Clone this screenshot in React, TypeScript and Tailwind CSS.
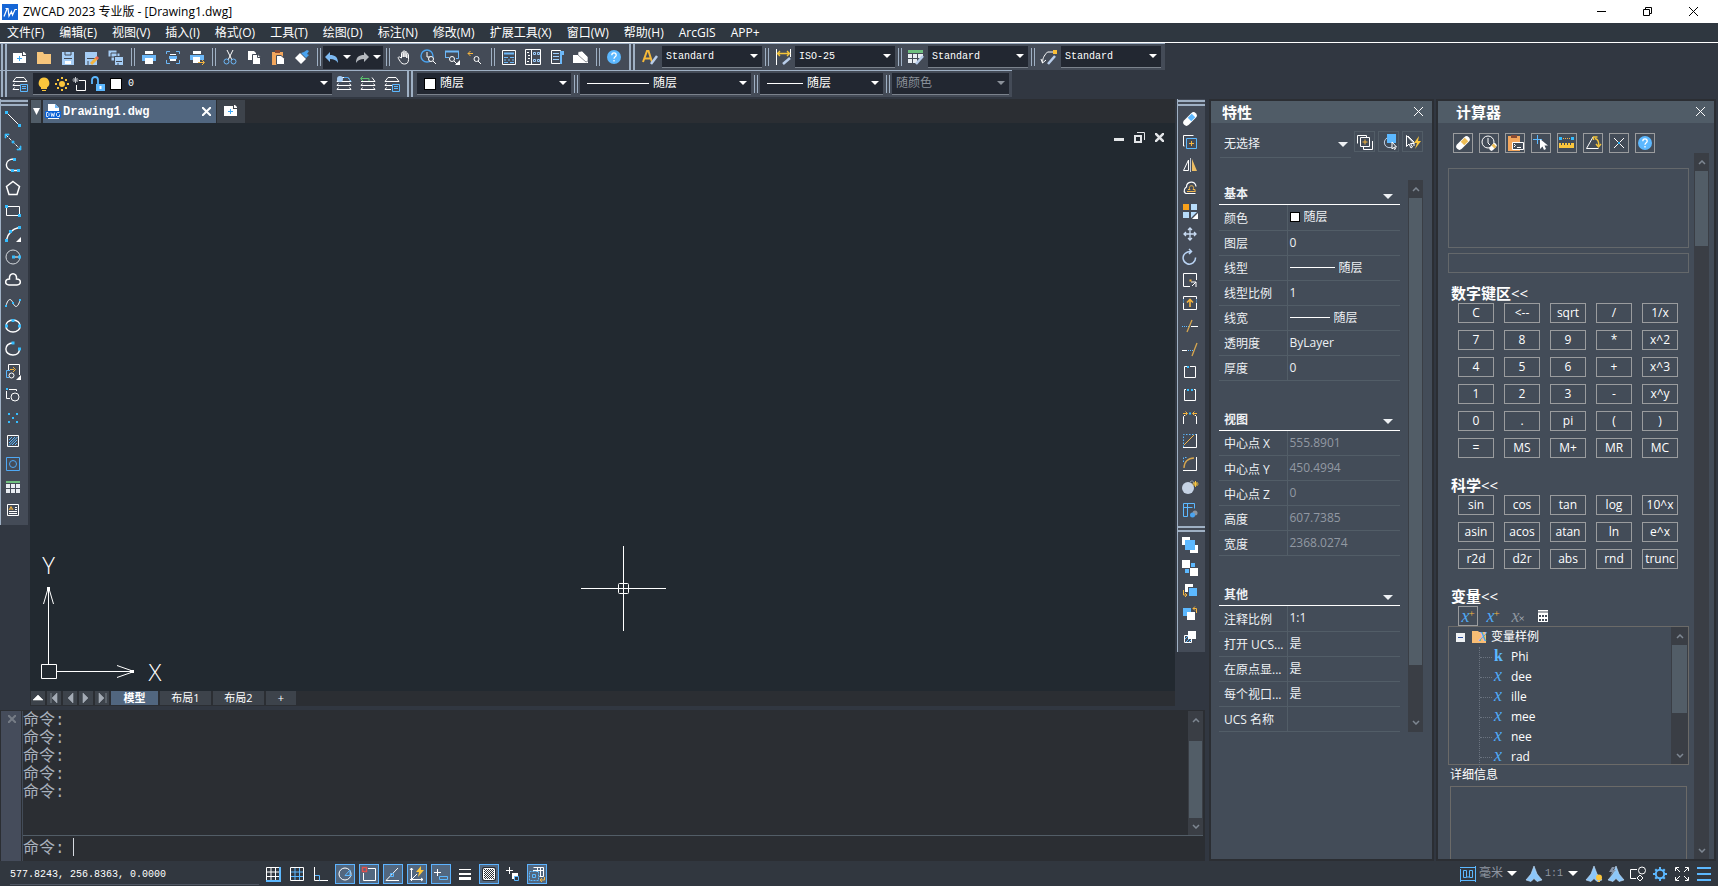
import type { ReactNode } from 'react';
import clsx from 'clsx';

const icons: Record<string, ReactNode> = {
  // standard toolbar
  new: (
    <>
      <path d="M1 4h9v3h4v7H1z" fill="#fff" stroke="none" />
      <path d="M11 3h1l2 2v1h-3z" fill="#fff" stroke="none" />
      <path d="M5 9.5h5M7.5 7v5" stroke="#3fa9f5" />
    </>
  ),
  open: <path d="M1 3h6l1 2h7v10H1z" fill="#f6c57c" stroke="none" />,
  save: (
    <>
      <path d="M2 3h12v13H2z" fill="#a6cdf5" stroke="none" />
      <path d="M5 12h6v3H5z" fill="#fff" stroke="none" />
      <path d="M4 9.5h8M5 3v3h6V3" stroke="#444b57" />
    </>
  ),
  saveAs: (
    <>
      <path d="M1 3h12v13H1z" fill="#a6cdf5" stroke="none" />
      <path d="M3 9.5h8M4 12v4" stroke="#444b57" />
      <path d="M7 15l6-6" stroke="#f5b53f" strokeWidth="3" />
      <path d="M12 10l2-2" stroke="#f06a55" strokeWidth="3" />
    </>
  ),
  saveAll: (
    <>
      <path d="M0 1h9v7H0zM3 4h9v8H3z" fill="#a6cdf5" stroke="#444b57" />
      <path d="M6.5 7.5h9v9h-9z" fill="#a6cdf5" stroke="#444b57" />
      <path d="M8 12.5h6M10 14v2" stroke="#444b57" />
    </>
  ),
  print: (
    <>
      <path d="M4 2h8v3H4z" fill="#fff" stroke="none" />
      <path d="M1 6h14v6H1z" fill="#6db8f8" stroke="none" />
      <path d="M4 9h8v6H4z" fill="#fff" stroke="none" />
    </>
  ),
  preview: (
    <>
      <path d="M1.5 5V2.5H5M11 2.5h3.5V5M14.5 11v3.5H11M5 14.5H1.5V11" stroke="#6db8f8" />
      <path d="M5 5h6v1H5zM5 9h6v3H5z" fill="#fff" stroke="none" />
      <path d="M4 7h8v3H4z" fill="#6db8f8" stroke="none" />
    </>
  ),
  publish: (
    <>
      <path d="M4 2h8v3H4z" fill="#fff" stroke="none" />
      <path d="M1 6h14v5H1z" fill="#6db8f8" stroke="none" />
      <path d="M4 8h7v6H4z" fill="#fff" stroke="none" />
      <path d="M9 13.5h6M13 11l2.5 2.5L13 16" stroke="#f5b53f" />
    </>
  ),
  cut: (
    <>
      <path d="M5 1l5 10M11 1L6 11" stroke="#fff" />
      <circle cx="4.5" cy="12.5" r="2.5" stroke="#6db8f8" />
      <circle cx="11.5" cy="12.5" r="2.5" stroke="#6db8f8" />
    </>
  ),
  copy: (
    <>
      <path d="M2 2h6l2 2v7H2z" fill="#fff" stroke="none" />
      <path d="M6.5 5.5H12l2.5 2.5v7.5h-8z" fill="#fff" stroke="#444b57" />
      <path d="M11.5 5.5v3h3" stroke="#444b57" />
    </>
  ),
  paste: (
    <>
      <path d="M2 3h11v13H2z" fill="#f2a65c" stroke="none" />
      <path d="M5 1h5v3H5z" fill="#8a4a32" stroke="none" />
      <path d="M6.5 6.5H11l3.5 3v6h-8z" fill="#fff" stroke="#444b57" />
    </>
  ),
  brush: (
    <>
      <path d="M1 9l5-5 6 6-5 5z" fill="#fff" stroke="none" />
      <path d="M7 4l5 5 3-3-2-1 2-3-2-1-3 2z" fill="#4aa3ef" stroke="none" />
    </>
  ),
  undo: <path d="M6 3v3c5 0 8 2 8 8-2-3-4-4-8-4v3L1 8z" fill="#7db9f2" stroke="none" />,
  redo: <path d="M10 3v3c-5 0-8 2-8 8 2-3 4-4 8-4v3l5-5z" fill="#b5b9bf" stroke="none" />,
  hand: (
    <path d="M5.5 9V4.2c0-1.3 1.7-1.3 1.7 0V8 2.7c0-1.3 1.8-1.3 1.8 0V8 3.5c0-1.3 1.8-1.3 1.8 0V9 5.5c0-1.3 1.7-1.3 1.7 0v5c0 3-1.5 4.5-4 4.5-2 0-3.2-.8-4.2-2.5L2.3 9.3c-.6-1.2.8-2 1.7-1z" stroke="#fff" />
  ),
  zoomRealtime: (
    <>
      <circle cx="7" cy="7" r="6" stroke="#4aa3ef" strokeWidth="1.4" />
      <path d="M7 3v5h3" stroke="#fff" />
      <circle cx="11" cy="10" r="2.5" stroke="#fff" fill="#444b57" />
      <path d="M13 12l3 3" stroke="#fff" />
    </>
  ),
  zoomWindow: (
    <>
      <path d="M1.5 9V2.5h13v7H12M1 8.5h4" stroke="#6db8f8" />
      <path d="M1 2.5h14" stroke="#6db8f8" strokeWidth="2" />
      <circle cx="8" cy="10" r="2.5" stroke="#fff" fill="#444b57" />
      <path d="M10 12l3 3" stroke="#fff" />
      <path d="M16 11v5h-5z" fill="#fff" stroke="none" />
    </>
  ),
  zoomPrevious: (
    <>
      <path d="M0 4.5h5M2.5 2L0 4.5 2.5 7" stroke="#f5b53f" />
      <circle cx="8.5" cy="10" r="2.5" stroke="#fff" />
      <path d="M10 12l3 3" stroke="#fff" />
    </>
  ),
  properties: (
    <>
      <path d="M1.5 1.5h13v14h-13z" stroke="#fff" />
      <path d="M3 4.5h10" stroke="#6db8f8" strokeWidth="2" />
      <path d="M3 8.5h4M9 8.5h4M3 11h2M7 11h2M11 11h2M3 13.5h4M9 13.5h4" stroke="#6db8f8" />
    </>
  ),
  designCenter: (
    <>
      <path d="M.5.5h15v15H.5zM6.5.5v15" stroke="#fff" />
      <path d="M2 3.5h2M3 6.5h2M3 9.5h2M2 12.5h2" stroke="#fff" />
      <path d="M8.5 3.5h2v2h-2zM12.5 3.5h2v2h-2zM8.5 10.5h2v2h-2zM12.5 10.5h2v2h-2z" stroke="#9ccdfc" />
    </>
  ),
  toolPalette: (
    <>
      <path d="M2.5 1.5h9v13h-9z" stroke="#fff" />
      <path d="M4 4.5h6M4 7.5h6M4 10.5h6" stroke="#9ccdfc" />
      <path d="M11 2h4v4h-2v9h-2z" fill="#6db8f8" stroke="none" />
    </>
  ),
  clean: (
    <>
      <path d="M0 6h6l9 6v2H0z" fill="#fff" stroke="none" />
      <path d="M5 3l4-1 6 6v4l-2 1-8-7z" fill="#fff" stroke="#444b57" strokeWidth=".6" />
    </>
  ),
  textStyle: (
    <>
      <path d="M1 13L5 2h1.5L10 13M3 9.5h6" stroke="#f5b93a" strokeWidth="2" />
      <path d="M9 15l6-8" stroke="#b9cdea" strokeWidth="2.5" />
    </>
  ),
  dimStyle: (
    <>
      <path d="M1.5 0v16M15.5 0v8" stroke="#fff" />
      <path d="M3 4.5h11M5 2L2.5 4.5 5 7M12 2l2.5 2.5L12 7" stroke="#f5c53a" strokeWidth="1.4" />
      <path d="M8 15l7-6" stroke="#b9cdea" strokeWidth="2.5" />
    </>
  ),
  tableStyle: (
    <>
      <path d="M0 1h15v3H0z" fill="#6fbf7f" stroke="none" />
      <path d="M0 5h4v4H0zM5 5h4v4H5zM10 5h5v4h-5zM0 10h4v4H0zM5 10h4v4H5z" fill="#e9edf2" stroke="none" />
      <path d="M8 15l7-8" stroke="#b9cdea" strokeWidth="2.5" />
    </>
  ),
  leaderStyle: (
    <>
      <path d="M1.5 14c0-4 1-7 5-11H12M0 10l1.5 4L5 11" stroke="#fff" />
      <path d="M12 1h4v4h-4z" fill="#fbbf36" stroke="none" />
      <path d="M7 15l7-8" stroke="#b9cdea" strokeWidth="2.5" />
    </>
  ),
  help: (
    <>
      <circle cx="8" cy="8" r="7" fill="#5cb8ff" stroke="none" />
      <path d="M5.8 6.2c0-3 4.400-3 4.400 0 0 1.600-2.200 1.600-2.200 3.600M8 11v1.500" stroke="#fff" strokeWidth="1.3" />
    </>
  ),
  // layers
  layers: (
    <>
      <path d="M4 1.5h8l3 4H1zM2.5 7.5L1 9.5h7M2.5 11.5L1 13.5h6" stroke="#fff" />
      <path d="M8.5 8.5h7v7h-7zM10 10.5h4M10 12.5h4" stroke="#5cb8ff" fill="#444b57" />
    </>
  ),
  layerPrev: (
    <>
      <path d="M4 1.5h8l3 4H1zM2.5 7.5L1 9.5h14l-1.5-2M2.5 11.5L1 13.5h14l-1.5-2" stroke="#fff" />
      <circle cx="4" cy="3" r="3" fill="#a6cdf5" stroke="none" />
      <path d="M8 1.5h4l3 4" stroke="#4aa3ef" />
    </>
  ),
  layerBack: (
    <>
      <path d="M12 1.5l3 4H1M2.5 7.5L1 9.5h14l-1.5-2M2.5 11.5L1 13.5h14l-1.5-2" stroke="#fff" />
      <path d="M9 5V2.5H1M3 0L.5 2.5 3 5" stroke="#5ac46c" />
    </>
  ),
  bulb: (
    <>
      <path d="M8 1.5a5.5 5.5 0 0 1 3 10V13H5v-1.5a5.5 5.5 0 0 1 3-10z" fill="#fbc63c" stroke="none" />
      <path d="M6 14.5h4" stroke="#fbc63c" />
    </>
  ),
  sun: (
    <>
      <circle cx="8" cy="8" r="3" fill="#fbc63c" stroke="none" />
      <path d="M7 1h2v2H7zM7 13h2v2H7zM1 7h2v2H1zM13 7h2v2h-2zM3 3h2v2H3zM11 3h2v2h-2zM3 11h2v2H3zM11 11h2v2h-2z" fill="#fbc63c" stroke="none" />
    </>
  ),
  freeze: (
    <>
      <path d="M7 4.5h6.5v10h-9V9" stroke="#fff" />
      <path d="M3.5 1v6M.5 4h6M1.5 2l4 4M5.5 2l-4 4" stroke="#c3c7cd" />
    </>
  ),
  unlock: (
    <>
      <path d="M2 8V4c0-4 6-4 6 0v4" stroke="#5cb8ff" strokeWidth="1.8" />
      <path d="M6 8h9v7H6z" fill="#5cb8ff" stroke="none" />
      <path d="M10.5 10v3" stroke="#fff" strokeWidth="2" />
    </>
  ),
  // draw
  line: (
    <>
      <path d="M2 2l12 12" />
      <path d="M0 0h3v3H0zM13 13h3v3h-3z" fill="#35bdff" stroke="none" />
    </>
  ),
  xline: (
    <>
      <path d="M1 1l14 14" strokeDasharray="3 1.5" />
      <path d="M0 0h4v1H1v3H0zM12 15h3v-3h1v4h-4zM7 7h2v2H7z" fill="#35bdff" stroke="#35bdff" strokeWidth=".7" />
    </>
  ),
  polyline: (
    <>
      <path d="M9 2C-1 2-1 13.5 8 13.5h6" strokeWidth="1.4" />
      <path d="M8 1h3v3H8zM6 12h3v3H6zM12 12h3v3h-3z" fill="#35bdff" stroke="none" />
    </>
  ),
  polygon: <path d="M8 1.5l6.5 5L12 14.5H4L1.5 6.5z" strokeWidth="1.5" />,
  rectangle: (
    <>
      <path d="M1.5 4v8.5H13M3 3.5h11.5V11" />
      <path d="M0 2h3v3H0zM13 11h3v3h-3z" fill="#35bdff" stroke="none" />
    </>
  ),
  arc: (
    <>
      <path d="M1.5 14C3 7 7 3 14 1.5" strokeWidth="1.4" />
      <path d="M0 13h3v3H0zM4 4h3v3H4zM13 0h3v3h-3z" fill="#35bdff" stroke="none" />
      <path d="M16 11v5h-5z" fill="#fff" stroke="none" />
    </>
  ),
  circle: (
    <>
      <circle cx="8" cy="8" r="7" stroke="#d4d8dd" />
      <path d="M8 8h6" />
      <path d="M7 6.5h3v3H7zM13 6.5h3v3h-3z" fill="#35bdff" stroke="none" />
    </>
  ),
  cloud: <path d="M4.5 7C3.5 0 12.5 0 11.5 7c5 0 5 6 .5 6H4c-4.5 0-4.5-6 .5-6z" strokeWidth="1.5" />,
  spline: (
    <>
      <path d="M1 11C3 3 6 3 8 8s5 5 7-3" />
      <path d="M0 10h2v2H0zM7 7h2v2H7zM14 4h2v2h-2z" fill="#35bdff" stroke="none" />
    </>
  ),
  ellipse: (
    <>
      <ellipse cx="8" cy="8" rx="7.2" ry="6" strokeWidth="1.4" />
      <path d="M6.5 1h3v3h-3zM0 6.5h3v3H0zM13 6.5h3v3h-3z" fill="#35bdff" stroke="none" />
    </>
  ),
  ellipseArc: (
    <>
      <path d="M8 2C-1.5 2-1.5 14 8 14c4 0 6.5-2 6.5-6" strokeWidth="1.4" />
      <path d="M6.5.5h3v3h-3zM13 6.5h3v3h-3z" fill="#35bdff" stroke="none" />
    </>
  ),
  insertBlock: (
    <>
      <path d="M3.5 6V.5h11V11" />
      <path d="M5 6.5H1.5v7H4" stroke="#5cb8ff" />
      <circle cx="6.5" cy="11.5" r="2.5" />
      <path d="M5 5.5h4M8 3l2.5 2.5L8 8" stroke="#f5b53f" />
      <path d="M16 11v5h-5z" fill="#fff" stroke="none" />
    </>
  ),
  makeBlock: (
    <>
      <path d="M1.5 4v7.5H5M4 2.5h7.5V4" />
      <circle cx="10" cy="10" r="4" />
      <path d="M1 1h2v2H1z" fill="#35bdff" stroke="none" />
    </>
  ),
  point: <path d="M3 3h2v2H3zM11 3h2v2h-2zM7 7h2v2H7zM3 11h2v2H3zM11 11h2v2h-2z" fill="#35bdff" stroke="none" />,
  hatch: (
    <>
      <path d="M2.5 2.5h11v11h-11z" />
      <path d="M4 7l3-3M4 10l6-6M4 12.5L12.5 4M7 12l5-5M10 12l2-2" stroke="#5cb8ff" />
    </>
  ),
  region: (
    <>
      <path d="M1.5 1.5h13v13h-13z" stroke="#4fa9f5" />
      <circle cx="8" cy="8" r="3.5" stroke="#4fa9f5" />
    </>
  ),
  table: (
    <>
      <path d="M1 2h14v2H1z" fill="#6fbf7f" stroke="none" />
      <path d="M1 5h4v4H1zM6 5h4v4H6zM11 5h4v4h-4zM1 10h4v4H1zM6 10h4v4H6zM11 10h4v4h-4z" fill="#e9edf2" stroke="none" />
    </>
  ),
  mtext: (
    <>
      <path d="M2.5 2.5h11v11h-11zM10 5.5h2M10 7.5h2M4 9.5h8M4 11.5h8" />
      <path d="M4 8l2-3.5L8 8M5 7h2" stroke="#f5b53f" />
    </>
  ),
  // modify
  erase: (
    <>
      <path d="M4.5 11.5l7-7" stroke="#fff" strokeWidth="6.5" strokeLinecap="round" />
      <path d="M7.5 8.5l4-4" stroke="#5cb8ff" strokeWidth="5" />
    </>
  ),
  eraseGold: (
    <>
      <path d="M4.5 11.5l7-7" stroke="#fff" strokeWidth="6.5" strokeLinecap="round" />
      <path d="M7.5 8.5l4-4" stroke="#edbd55" strokeWidth="5" />
    </>
  ),
  copyObject: (
    <>
      <path d="M2.5 12H1.5V1.5h10" />
      <path d="M4.5 4.5h10v10h-10z" stroke="#5cb8ff" />
      <path d="M7 9.5h5M9.5 7v5" stroke="#f5b53f" />
    </>
  ),
  mirror: (
    <>
      <path d="M6.5 3v10.5h-5z" />
      <path d="M8.5 1v14" stroke="#c3c7cd" />
      <path d="M10 2l5 12h-5z" fill="#edbd63" stroke="none" />
    </>
  ),
  offset: (
    <>
      <path d="M3.5 13.5h10M3.5 13.5c-3-3 0-6 1-6.5 0-6 9-7 9.5-.5" strokeWidth="1.2" />
      <path d="M5 11.5h8.5M6 9.5h2M11 9.5h2v2M8 9.5c-3-5 6-5 3 0" stroke="#f0b64e" />
    </>
  ),
  array: (
    <>
      <path d="M1 1h6v6H1z" fill="#f9a11b" stroke="none" />
      <path d="M9 1h6v6H9zM1 9h6v6H1z" fill="#b7dcfb" stroke="none" />
      <path d="M9 9h6l-6 6z" fill="#b7dcfb" stroke="none" />
      <path d="M16 10v6h-6z" fill="#fff" stroke="none" />
    </>
  ),
  move: (
    <path d="M8 2v12M2 8h12M6 4l2-2 2 2M6 12l2 2 2-2M4 6L2 8l2 2M12 6l2 2-2 2" stroke="#c7daf2" strokeWidth="1.3" />
  ),
  rotate: <path d="M3 4.5a6.200 6.200 0 1 0 10.500 4M3 4.500C4.500 3 6 2.500 9 2.500M7 0l2.500 2.500L7 5" stroke="#b9d3f3" strokeWidth="1.5" />,
  scale: (
    <>
      <path d="M8 14.5H1.5v-13h13V8M9 10h5v5M14 10l-4 4" />
      <path d="M7.5 7.5h2v2h-2z" fill="#f5b53f" stroke="none" />
    </>
  ),
  stretch: (
    <>
      <path d="M1.5 8v6.5h13V8M1.5 4V1.5h13V4" />
      <path d="M1.5 4.5v3M14.5 4.5v3" stroke="#5cb8ff" strokeDasharray="1 1" />
      <path d="M8 12V5M5 7.5l3-3 3 3" stroke="#f5b53f" strokeWidth="1.6" />
    </>
  ),
  trim: (
    <>
      <path d="M0 8.5h7" stroke="#5cb8ff" strokeDasharray="1 1" />
      <path d="M9 8.5h7" />
      <path d="M5 14l5-12" stroke="#d6a650" strokeWidth="1.3" />
    </>
  ),
  extend: (
    <>
      <path d="M0 9.5h5" />
      <path d="M6 9.5h5" stroke="#5cb8ff" strokeDasharray="1 1" />
      <path d="M10 15l5-13" stroke="#d6a650" strokeWidth="1.3" />
    </>
  ),
  breakPoint: (
    <>
      <path d="M5 2.5H2.5v11h11v-11H8" />
      <path d="M5 2h2v2H5z" fill="#35bdff" stroke="none" />
    </>
  ),
  break: (
    <>
      <path d="M4 2.5H2.5v11h11v-11H12" />
      <path d="M5 2h2v2H5zM9 2h2v2H9z" fill="#35bdff" stroke="none" />
    </>
  ),
  join: (
    <>
      <path d="M1.5 14V6.5L3 5M14.5 14V6.5L13 5" />
      <path d="M1 3.5h4M3.5 1.5l2 2-2 2M15 3.5h-4M12.5 1.5l-2 2 2 2" stroke="#f5b53f" />
      <path d="M7 2.5h2v2H7z" fill="#35bdff" stroke="none" />
    </>
  ),
  chamfer: (
    <>
      <path d="M14.5 1v13.5H1" />
      <path d="M1.5 14V1.5H14" stroke="#5cb8ff" strokeDasharray="1.5 1.5" />
      <path d="M2 12L12 2" stroke="#f0b64e" />
    </>
  ),
  fillet: (
    <>
      <path d="M14.5 1v13.5H1" />
      <path d="M1.5 6V1.5H6" stroke="#5cb8ff" strokeDasharray="1.5 1.5" />
      <path d="M2 12C2 6 6 2 12 2" stroke="#d6a650" strokeWidth="1.3" />
    </>
  ),
  explode: (
    <>
      <circle cx="6" cy="9" r="6" fill="#c5d2e4" stroke="none" />
      <path d="M8 3c2-2 4-1 4 2" stroke="#9aa5b3" />
      <path d="M13.5 2v6M10.5 5h6M11.5 3l4 4M15.5 3l-4 4" stroke="#fbc63c" />
    </>
  ),
  blockEdit: (
    <>
      <path d="M1.5 1.5h11v5M1.5 1.5v13h4v-13M1.5 5.5h9" stroke="#5cb8ff" />
      <circle cx="13" cy="11" r="2.5" fill="#8d949e" stroke="none" />
      <circle cx="10.5" cy="13" r="2.5" fill="#4aa3ef" stroke="none" />
    </>
  ),
  bringFront: (
    <>
      <path d="M0 0h8v3H3v5H0zM16 16H8v-3h5V8h3z" fill="#fff" stroke="none" />
      <path d="M3 3h10v10H3z" fill="#5cb8ff" stroke="none" />
    </>
  ),
  sendBack: (
    <>
      <path d="M0 0h8v8H0zM8 8h8v8H8z" fill="#fff" stroke="none" />
      <path d="M9 3h4v4H9zM3 9h4v4H3z" fill="#5cb8ff" stroke="none" />
    </>
  ),
  bringAbove: (
    <>
      <path d="M3 1h8v3H6v5H3z" fill="#fff" stroke="none" />
      <path d="M7 5h8v8H7z" fill="#5cb8ff" stroke="none" />
      <path d="M1.5 7v5H5M3 10l2 2-2 2" stroke="#f5b53f" />
    </>
  ),
  sendUnder: (
    <>
      <path d="M1 2h8v8H1z" fill="#5cb8ff" stroke="none" />
      <path d="M5 6h8v8H5z" fill="#fff" stroke="none" />
      <path d="M14.5 7V2.5H11M13 .5l-2 2 2 2" stroke="#f5b53f" />
    </>
  ),
  hatchBack: (
    <>
      <path d="M2.5 6.5h7v7h-7z" />
      <path d="M3 10l3-3M4 13l5-5M7 13l2-2" stroke="#5cb8ff" />
      <path d="M6 2h8v8H6z" fill="#fff" stroke="none" />
    </>
  ),
  // properties panel
  pickAdd: (
    <>
      <path d="M.5 9.5v-8h9v2" />
      <path d="M15.5 7v8.5h-9V13" />
      <path d="M3.5 3.5h9v9h-9z" fill="#434c58" />
      <path d="M5.5 8h5M8 5.5v5" stroke="#f5b53f" />
    </>
  ),
  select: (
    <>
      <path d="M6 4a5 5 0 1 0 5 9" stroke="#c5d2e4" />
      <path d="M6 0h9v9H6z" fill="#5cb8ff" stroke="none" />
      <path d="M11 8v7l1.5-1.5 1 2 1-.5-1-2h2z" fill="#434c58" />
    </>
  ),
  quickSelect: (
    <>
      <path d="M1.5 1.5v11L4 10l2 4 1.5-1-2-3.5H9z" />
      <path d="M3 2l6 6v4" />
      <path d="M14 2L9 9h3l-2 6 6-8h-3z" fill="#fbc63c" stroke="none" />
    </>
  ),
  // calculator
  history: (
    <>
      <circle cx="7" cy="7" r="6" />
      <path d="M7 3v5l2 2" />
      <path d="M10.5 13.5l3-3" stroke="#fff" strokeWidth="4.5" strokeLinecap="round" />
      <path d="M12 12l2-2" stroke="#edbd55" strokeWidth="4" />
    </>
  ),
  pasteCmd: (
    <>
      <path d="M1 1h12v15H1z" fill="#f2a65c" stroke="none" />
      <path d="M4 0h6v3H4z" fill="#8a4a32" stroke="none" />
      <path d="M5.5 7.5h11v7h-11z" fill="#434c58" />
      <path d="M7 9l1.5 1.5L7 12M10 12.5h4" />
    </>
  ),
  getCoords: (
    <>
      <path d="M4.5 0v9M0 4.5h9" stroke="#5cb8ff" />
      <path d="M7 4v10l2.5-2.5L11 15l2-1-1.5-3.5H15z" fill="#fff" stroke="none" />
    </>
  ),
  distance: (
    <>
      <path d="M0 2h3v3H0zM12 2h3v3h-3z" fill="#35bdff" stroke="none" />
      <path d="M4 3.5h8" stroke="#f0b64e" strokeDasharray="1 1" />
      <path d="M0 8h15v5H0z" fill="#fbc63c" stroke="none" />
      <path d="M2.5 8v2M5.5 8v2M8.5 8v2M11.5 8v2" stroke="#434c58" />
    </>
  ),
  angle: (
    <>
      <path d="M8 2L1.5 13.5h12" />
      <path d="M10 3.5c3 1 4 4 3.5 7M8.5 5V2h4M11 9l2.5 3L16 9" stroke="#f5c53a" strokeWidth="1.4" />
    </>
  ),
  intersect: (
    <>
      <path d="M3 3l10 10M13 3L3 13" />
      <path d="M7 7h2v2H7z" fill="#35bdff" stroke="none" />
    </>
  ),
  calculator: (
    <>
      <path d="M3 2h10v12H3z" fill="#fff" stroke="none" />
      <path d="M3 4h10" stroke="#a5a9ae" strokeWidth="2" />
      <path d="M4 7h2v2H4zM7 7h2v2H7zM10 7h2v2h-2zM4 11h2v2H4zM7 11h2v2H7zM10 11h2v2h-2z" fill="#434c58" stroke="none" />
    </>
  ),
  folderVar: <path d="M1 2h6l1 1h7v11H1z" fill="#f8bd74" stroke="none" />,
  // status bar
  snap: (
    <>
      <path d="M1.5 1.5h13v13h-13zM6 1v13M10.5 1v13M1 6h13M1 10.5h13" />
      <path d="M15 1v14H1" stroke="#5cb8ff" strokeWidth="2" />
    </>
  ),
  grid: (
    <>
      <path d="M6 2v12M10.5 2v12M2 6h12M2 10.5h12" stroke="#5cb8ff" />
      <path d="M1.5 1.5h13v13h-13z" />
    </>
  ),
  ortho: (
    <>
      <path d="M1.5 1v13.5H15" />
      <path d="M2 9.5h4.5v5" stroke="#5cb8ff" />
    </>
  ),
  polar: (
    <>
      <circle cx="8" cy="8" r="6" />
      <path d="M15 9.5H8L13 4v5" stroke="#5cb8ff" />
    </>
  ),
  osnap: (
    <>
      <path d="M7 2.5h7.5v12h-12V7" />
      <path d="M1.5 1.5h4v4h-4z" stroke="#e2504d" strokeWidth="1.5" />
    </>
  ),
  otrack: (
    <>
      <path d="M14 14.5H1L13 2" />
      <path d="M5.5 7.5h3v3h-3z" stroke="#5cb8ff" />
    </>
  ),
  ducs: (
    <>
      <path d="M2.5 15V2M1 4l1.5-2L4 4M1 13.5h13M12 12l2 1.5-2 1.500M2 14l6-6" />
      <path d="M12 0L7 6h3l-1 5 6-7h-3z" fill="#fbc63c" stroke="none" />
    </>
  ),
  dynInput: (
    <>
      <path d="M1 6.5h7M4.5 3v7" />
      <path d="M6.5 10.5h8v3h-8z" stroke="#5cb8ff" />
    </>
  ),
  lineWeight: (
    <>
      <path d="M2 3.5h12" strokeWidth="1" />
      <path d="M2 8h12" strokeWidth="2" />
      <path d="M2 12.5h12" strokeWidth="3" />
    </>
  ),
  transparency: (
    <>
      <rect x="1" y="1" width="14" height="14" rx="2" fill="#2a2e34" stroke="none" />
      <rect x="2.5" y="2.5" width="11" height="11" rx="1" fill="#fff" />
      <path d="M3 3.5h10M3 5.5h10M3 7.5h10M3 9.5h10M3 11.5h10" stroke="#2a2e34" strokeDasharray="1 1" />
      <path d="M4 4.5h9M4 6.5h9M4 8.5h9M4 10.5h9M4 12.5h9" stroke="#2a2e34" strokeDasharray="1 1" />
    </>
  ),
  cycle: (
    <>
      <path d="M1 4.5h7M4.5 1v7" />
      <path d="M7 7h6v6H7z" fill="#fff" stroke="none" />
      <path d="M9.5 10.5h4v4h-4z" stroke="#5cb8ff" fill="#31373f" />
    </>
  ),
  annoMon: (
    <>
      <path d="M4.5 1.5h10v9h-4M4 4.5h10M8.5 2v4M11.5 2v8" />
      <path d="M.5 5.5h9v9h-9z" stroke="#5cb8ff" strokeDasharray="2 1" />
      <path d="M3.5 8.5h3v3h-3z" stroke="#5cb8ff" />
      <path d="M15.5 11v3h-4M13 12l-2 2 2 2" stroke="#f5b53f" />
    </>
  ),
  units: (
    <>
      <path d="M0 1.5h16M.5 3v13M15.5 0v16M0 14.5h16" stroke="#5cb8ff" />
      <path d="M3.5 4.5h3v7h-3zM9.5 4.5h3v7h-3zM8 10v2" stroke="#5cb8ff" />
    </>
  ),
  annoScale: (
    <path d="M8 0l3 8 5 6-5 1.5-3-3-3 3L0 14l5-6z" fill="#8cc7fa" stroke="#c7e2fb" strokeWidth=".6" />
  ),
  annoVisible: (
    <>
      <path d="M8 0l3 8 5 6-5 1.5-3-3-3 3L0 14l5-6z" fill="#8cc7fa" stroke="#c7e2fb" strokeWidth=".6" />
      <circle cx="13" cy="11.5" r="3" fill="#fbc63c" stroke="none" />
      <path d="M12 15.5h2" stroke="#fbc63c" />
    </>
  ),
  annoAuto: (
    <>
      <path d="M8 0l3 8 5 6-5 1.5-3-3-3 3L0 14l5-6z" fill="#8cc7fa" stroke="#c7e2fb" strokeWidth=".6" />
      <path d="M4 1L1 6h3L2 10l6-6H5l2-3z" fill="#8794a8" stroke="none" />
    </>
  ),
  isolate: (
    <>
      <path d="M7 3.5H.5v9H6" />
      <circle cx="12" cy="4.5" r="3.5" />
      <path d="M10 9l-3 3 3 3 3-3z" />
    </>
  ),
  gear: (
    <>
      <circle cx="8" cy="8" r="4.2" stroke="#5cb8ff" strokeWidth="2" />
      <path d="M7 1h2v3H7zM7 12h2v3H7zM1 7h3v2H1zM12 7h3v2h-3zM2.5 4L4 2.5l2 2L4.5 6zM10 11.5l1.5-1.5 2 2-1.5 1.5zM12 2.5L13.5 4l-2 2L10 4.5zM4.5 10L6 11.5l-2 2L2.5 12z" fill="#5cb8ff" stroke="none" />
    </>
  ),
  fullScreen: (
    <path d="M5 1.5H1.5V5M11 1.5h3.5V5M5 14.5H1.5V11M11 14.5h3.5V11M2 2l4 4M14 2l-4 4M2 14l4-4M14 14l-4-4" />
  ),
  menu: <path d="M1 2h14M1 8h14M1 14h14" stroke="#5cb8ff" strokeWidth="2" />,
};

const SANS = "font-['Open_Sans','Noto_Sans_CJK_SC',sans-serif]";
const MONO = "font-['Liberation_Mono','Noto_Sans_CJK_SC',monospace]";

function Icon({ name }: { name: string }) {
  return (
    <svg width="16" height="16" viewBox="0 0 16 16" fill="none" stroke="#fff" overflow="visible" className="shrink-0" aria-hidden="true">
      {icons[name]}
    </svg>
  );
}

function ToolButton({ name, className }: { name: string; className?: string }) {
  return (
    <button type="button" aria-label={name} className={clsx('flex shrink-0 items-center justify-center', className ?? 'h-6 w-6')}>
      <Icon name={name} />
    </button>
  );
}

function Caret({ className, large }: { className?: string; large?: boolean }) {
  return (
    <svg
      width={large ? 10 : 8}
      height={large ? 5 : 4}
      viewBox="0 0 8 4"
      className={clsx('pointer-events-none shrink-0', className)}
      aria-hidden="true"
    >
      <path d="M0 0h8L4 4z" fill="currentColor" />
    </svg>
  );
}

function Chevron({ down }: { down?: boolean }) {
  return (
    <svg width="8" height="5" viewBox="0 0 8 5" fill="none" stroke="#7e8792" strokeWidth="1.5" aria-hidden="true">
      <path d={down ? 'M1 1l3 3 3-3' : 'M1 4l3-3 3 3'} />
    </svg>
  );
}

function Grip({ wide }: { wide?: boolean }) {
  return (
    <div className={clsx('flex shrink-0 justify-center gap-0.5 self-stretch', wide ? 'w-3' : 'w-[9px] py-1')}>
      <span className={clsx('bg-[#9fb0c4]', wide ? 'w-0.5' : 'w-px')} />
      <span className={clsx('bg-[#9fb0c4]', wide ? 'w-0.5' : 'w-px')} />
    </div>
  );
}

function EdgeGrip() {
  return (
    <div className="flex shrink-0 gap-0.5 self-stretch pl-px">
      <span className="w-0.5 bg-[#9fb0c4]" />
      <span className="w-0.5 bg-[#9fb0c4]" />
    </div>
  );
}

function Combo({
  label,
  value,
  prefix,
  className,
  muted,
}: {
  label: string;
  value: string;
  prefix?: ReactNode;
  className: string;
  muted?: boolean;
}) {
  return (
    <div
      className={clsx(
        'relative flex h-[22px] shrink-0 items-center border-b border-[#7b828c] bg-[#222731]',
        muted ? 'text-[#8b919a]' : 'text-white',
        className,
      )}
    >
      {prefix}
      <select
        aria-label={label}
        className={clsx(
          'h-[21px] min-w-0 flex-1 appearance-none bg-transparent pl-1 outline-none',
          MONO,
          /^[\x00-\x7f]+$/.test(value) ? 'text-[10px]' : 'text-xs',
        )}
      >
        <option>{value}</option>
      </select>
      <Caret className="absolute right-1 top-2" />
    </div>
  );
}

function ScrollBar({ className, thumb }: { className?: string; thumb: string }) {
  return (
    <div className={clsx('flex shrink-0 flex-col bg-[#3a3e45]', className)}>
      <div className="flex h-[18px] shrink-0 items-center justify-center">
        <Chevron />
      </div>
      <div className="min-h-0 flex-1 px-px">
        <div className={clsx('bg-[#525d67]', thumb)} />
      </div>
      <div className="flex h-[18px] shrink-0 items-center justify-center">
        <Chevron down />
      </div>
    </div>
  );
}

const menus = [
  '文件(F)', '编辑(E)', '视图(V)', '插入(I)', '格式(O)', '工具(T)', '绘图(D)',
  '标注(N)', '修改(M)', '扩展工具(X)', '窗口(W)', '帮助(H)', 'ArcGIS', 'APP+',
];

const drawTools = [
  'line', 'xline', 'polyline', 'polygon', 'rectangle', 'arc', 'circle', 'cloud', 'spline',
  'ellipse', 'ellipseArc', 'insertBlock', 'makeBlock', 'point', 'hatch', 'region', 'table', 'mtext',
];

const modifyTools = [
  'erase', 'copyObject', 'mirror', 'offset', 'array', 'move', 'rotate', 'scale', 'stretch',
  'trim', 'extend', 'breakPoint', 'break', 'join', 'chamfer', 'fillet', 'explode', 'blockEdit',
];

const orderTools = ['bringFront', 'sendBack', 'bringAbove', 'sendUnder', 'hatchBack'];

function TitleBar() {
  return (
    <header className="flex h-[23px] shrink-0 items-center bg-white text-xs text-black">
      <svg width="16" height="16" viewBox="0 0 16 16" className="ml-0.5" aria-hidden="true">
        <path d="M0 0h16v16H0z" fill="#1566d6" />
        <path d="M2 12.5L5 5M3.5 4.5H6l1 7.5 2.5-4.5 1 3.5L13 5.5h2" fill="none" stroke="#fff" strokeWidth="1.2" />
      </svg>
      <h1 className="ml-[5px]">ZWCAD 2023 专业版 - [Drawing1.dwg]</h1>
      <div className="ml-auto flex pr-0.5">
        {['M1 5.5h9', 'M1.5 3.5h6v6h-6zM3.5 3V1.5h6v6H8', 'M1 1l9 9M10 1l-9 9'].map((d, i) => (
          <button key={d} type="button" aria-label={['minimize', 'restore', 'close'][i]} className="flex w-[46px] items-center justify-center">
            <svg width="11" height="11" viewBox="0 0 11 11" fill="none" stroke="#000">
              <path d={d} />
            </svg>
          </button>
        ))}
      </div>
    </header>
  );
}

function StandardToolbar() {
  return (
    <div className="flex h-[27px] w-fit items-center border-t border-[#9fb0c4] bg-[#444b57] pr-1">
      <EdgeGrip />
      <div className="flex pl-px">
        {['new', 'open', 'save', 'saveAs', 'saveAll'].map((n) => (
          <ToolButton key={n} name={n} />
        ))}
      </div>
      <Grip />
      {['print', 'preview', 'publish'].map((n) => (
        <ToolButton key={n} name={n} />
      ))}
      <Grip />
      {['cut', 'copy', 'paste', 'brush'].map((n) => (
        <ToolButton key={n} name={n} />
      ))}
      <Grip />
      <div className="flex h-[23px] w-[60px] items-center justify-between bg-[#222731] pr-0.5">
        <ToolButton name="undo" className="w-[18px]" />
        <Caret />
        <ToolButton name="redo" className="w-[18px]" />
        <Caret />
      </div>
      <Grip />
      {['hand', 'zoomRealtime', 'zoomWindow', 'zoomPrevious'].map((n) => (
        <ToolButton key={n} name={n} />
      ))}
      <Grip />
      {['properties', 'designCenter', 'toolPalette', 'clean'].map((n) => (
        <ToolButton key={n} name={n} />
      ))}
      <Grip />
      <ToolButton name="help" />
      <Grip wide />
      <ToolButton name="textStyle" />
      <Combo label="文字样式" value="Standard" className="w-[100px]" />
      <Grip />
      <ToolButton name="dimStyle" />
      <Combo label="标注样式" value="ISO-25" className="w-[100px]" />
      <Grip />
      <ToolButton name="tableStyle" />
      <Combo label="表格样式" value="Standard" className="w-[100px]" />
      <Grip />
      <ToolButton name="leaderStyle" />
      <Combo label="引线样式" value="Standard" className="w-[100px]" />
    </div>
  );
}

function LayerToolbar() {
  return (
    <div className="flex h-[27px] w-fit items-center border-t border-[#9fb0c4] bg-[#444b57] pr-[3px]">
      <EdgeGrip />
      <ToolButton name="layers" className="h-6 w-[26px]" />
      <Combo
        label="图层"
        value="0"
        className="w-[299px] pl-[3px]"
        prefix={
          <>
            <div className="flex gap-0.5">
              <Icon name="bulb" />
              <Icon name="sun" />
              <Icon name="freeze" />
              <Icon name="unlock" />
            </div>
            <span className="ml-1 mr-0.5 size-3 border border-black bg-white" />
          </>
        }
      />
      {['layerPrev', 'layerBack', 'layers'].map((n) => (
        <ToolButton key={n} name={n} />
      ))}
      <Grip wide />
      <Combo
        label="颜色"
        value="随层"
        className="ml-px w-[154px]"
        prefix={<span className="ml-[7px] size-3 border border-black bg-white" />}
      />
      <Grip />
      <Combo label="线型" value="随层" className="w-[171px]" prefix={<span className="ml-[7px] h-px w-[62px] bg-white" />} />
      <Grip />
      <Combo label="线宽" value="随层" className="w-[123px]" prefix={<span className="ml-[7px] h-px w-9 bg-white" />} />
      <Grip />
      <Combo label="打印样式" value="随颜色" className="w-[117px]" muted />
    </div>
  );
}

function SideTools({ tools }: { tools: string[] }) {
  return (
    <div className="flex w-7 flex-col border-l border-[#9fb0c4] bg-[#444b57] pb-1">
      <div className="flex h-2 flex-col gap-0.5 pt-px">
        <span className="h-0.5 bg-[#9fb0c4]" />
        <span className="h-0.5 bg-[#9fb0c4]" />
      </div>
      {tools.map((n) => (
        <ToolButton key={n} name={n} className="h-[23px] w-6 pt-px" />
      ))}
    </div>
  );
}

function DocumentTabs() {
  return (
    <div className="flex h-6 shrink-0 bg-[#2b2e33] pl-px pt-px">
      <button type="button" aria-label="文档列表" className="flex w-[10px] items-center justify-center bg-[#505c67]">
        <svg width="7" height="7" viewBox="0 0 7 7" aria-hidden="true">
          <path d="M0 0h7L3.5 7z" fill="#fff" />
        </svg>
      </button>
      <div className="ml-0.5 flex w-[173px] items-center bg-[#51667f]">
        <svg width="16" height="16" viewBox="0 0 16 16" className="ml-0.5 shrink-0" aria-hidden="true">
          <path d="M3 0h7l4 4v11H3z" fill="#fff" />
          <path d="M10 0v4h4z" fill="#6db8f8" />
          <path d="M0 7h16v7H0z" fill="#0b62d6" />
          <path d="M1.5 8.5H3l1 1v2l-1 1H1.5zM6 8.5l.8 4 1-3 1 3 .8-4M14.5 8.5h-2l-1 1v2l1 1h2v-2" fill="none" stroke="#fff" strokeWidth=".8" />
        </svg>
        <a href="#drawing1" className={clsx('ml-0.5 text-xs font-bold text-white', MONO)}>Drawing1.dwg</a>
        <button type="button" aria-label="关闭" className="ml-auto mr-[5px] flex w-[10px] justify-center">
          <svg width="9" height="9" viewBox="0 0 9 9" stroke="#fff" strokeWidth="2">
            <path d="M0 0l9 9M9 0L0 9" />
          </svg>
        </button>
      </div>
      <ToolButton name="new" className="ml-px w-7 bg-[#3d434b] pb-1" />
    </div>
  );
}

function Canvas() {
  return (
    <main className="relative min-h-0 flex-1 overflow-hidden bg-[#222930]">
      <div className="absolute right-2 top-1.5 flex gap-1">
        <button type="button" aria-label="最小化" className="flex size-4 items-center justify-center">
          <svg width="10" height="10" viewBox="0 0 10 10"><path d="M0 6h10v3H0z" fill="#e3e5e8" /></svg>
        </button>
        <button type="button" aria-label="还原" className="flex size-4 items-center justify-center">
          <svg width="11" height="11" viewBox="0 0 11 11" fill="none" stroke="#e3e5e8">
            <path d="M3 .5h7.5V8" />
            <path d="M1 4h6v6H1z" strokeWidth="2" />
          </svg>
        </button>
        <button type="button" aria-label="关闭窗口" className="flex size-4 items-center justify-center">
          <svg width="9" height="9" viewBox="0 0 9 9" stroke="#e3e5e8" strokeWidth="2.5"><path d="M0 0l9 9M9 0L0 9" /></svg>
        </button>
      </div>
      <svg width="86" height="86" viewBox="0 0 86 86" fill="none" stroke="#fff" className="absolute left-[551px] top-[423px]" aria-hidden="true">
        <path d="M42.5 0v85M0 42.5h85" />
        <rect x="37.5" y="37.5" width="10" height="10" rx="1" />
      </svg>
      <svg width="140" height="160" viewBox="0 -20 140 160" fill="none" stroke="#fff" className="absolute bottom-0 left-2" aria-hidden="true">
        <path d="M3.5 113.5h15v14h-15z" />
        <path d="M10.5 113V36M5.5 53l5-17 5 17M19 120.5h77M79 114.5l17 6-17 6" />
        <path d="M9 36h3v3H9zM92 119h4v3h-4z" fill="#fff" stroke="none" />
        <text x="10.5" y="23" textAnchor="middle" fill="#fff" stroke="none" className="font-['Open_Sans',sans-serif] text-2xl font-light">Y</text>
        <text x="117" y="130" textAnchor="middle" fill="#fff" stroke="none" className="font-['Open_Sans',sans-serif] text-2xl font-light">X</text>
      </svg>
    </main>
  );
}

function LayoutTabs() {
  const nav = ['M2 9l5-5 5 5z', 'M4 2v10M10 2v10L5 7z', 'M10 2v10L5 7z', 'M4 2v10l5-5z', 'M4 2v10l5-5zM11 2v10'];
  return (
    <div className={clsx('flex h-[15px] shrink-0 gap-0.5 bg-[#2b2e33] pb-px pl-px text-[11px] leading-[14px] text-white', SANS)}>
      {nav.map((d, i) => (
        <button key={d} type="button" aria-label={`layout nav ${i + 1}`} className="w-3.5 bg-[#3d434b]">
          <svg width="14" height="14" viewBox="0 0 14 14" aria-hidden="true">
            <path d={d} fill={i === 0 ? '#fff' : '#a4abb5'} stroke={i === 0 ? '#fff' : '#a4abb5'} strokeWidth=".6" />
          </svg>
        </button>
      ))}
      <button type="button" className="w-[47px] bg-[#51667f] font-bold">模型</button>
      <button type="button" className="w-[51px] bg-[#3d434b]">布局1</button>
      <button type="button" className="w-[51px] bg-[#3d434b]">布局2</button>
      <button type="button" className="w-[30px] bg-[#3d434b]">+</button>
    </div>
  );
}

function CommandLine() {
  return (
    <section className={clsx('mt-1 flex h-[151px] shrink-0 bg-[#2b2e33] pl-px pt-px text-base text-[#a9b1bd]', MONO)}>
      <button type="button" aria-label="关闭命令行" className="flex w-5 justify-center bg-[#454c5b] pt-1">
        <svg width="8" height="8" viewBox="0 0 8 8" stroke="#767c86" strokeWidth="2" className="ml-0.5">
          <path d="M0 0l8 8M8 0L0 8" />
        </svg>
      </button>
      <div className="ml-px flex flex-1 flex-col border-l border-[#434c58] pr-0.5">
        <div className="flex min-h-0 flex-1 justify-between">
          <div className="pt-px leading-[18px]">
            {[1, 2, 3, 4, 5].map((n) => (
              <p key={n}>命令:</p>
            ))}
          </div>
          <ScrollBar className="w-[15px]" thumb="mt-3 h-[77px]" />
        </div>
        <label className="flex h-[26px] items-center border-t border-[#525d67] pb-1 leading-5">
          <span className="pt-1">命令:</span>
          <input type="text" className="ml-2 h-[18px] flex-1 border-l border-[#d6dae0] bg-transparent outline-none" />
        </label>
      </div>
    </section>
  );
}

const sections = [
  {
    title: '基本',
    muted: false,
    rows: [
      ['颜色', '随层', 'swatch'],
      ['图层', '0'],
      ['线型', '随层', 'w-[45px]'],
      ['线型比例', '1'],
      ['线宽', '随层', 'w-10'],
      ['透明度', 'ByLayer'],
      ['厚度', '0'],
    ],
  },
  {
    title: '视图',
    muted: true,
    rows: [
      ['中心点 X', '555.8901'],
      ['中心点 Y', '450.4994'],
      ['中心点 Z', '0'],
      ['高度', '607.7385'],
      ['宽度', '2368.0274'],
    ],
  },
  {
    title: '其他',
    muted: false,
    rows: [
      ['注释比例', '1:1'],
      ['打开 UCS...', '是'],
      ['在原点显...', '是'],
      ['每个视口...', '是'],
      ['UCS 名称', ''],
    ],
  },
];

function PanelHeader({ title, inset }: { title: string; inset: string }) {
  return (
    <div className={clsx('flex h-[22px] shrink-0 items-center justify-between bg-[#505c67] pr-2 text-white', inset)}>
      <h2 className="text-[15px] leading-5 font-bold">{title}</h2>
      <button type="button" aria-label={`关闭${title}`} className="pb-0.5">
        <svg width="11" height="11" viewBox="0 0 11 11" stroke="#fff"><path d="M1 1l9 9M10 1l-9 9" /></svg>
      </button>
    </div>
  );
}

function PropertiesPanel() {
  return (
    <aside className="flex w-[225px] shrink-0 flex-col border-2 border-[#2b2e33] bg-[#434c58] text-xs text-[#eef1f4]">
      <PanelHeader title="特性" inset="pl-[11px]" />
      <div className="flex gap-[3px] pl-[9px] pt-2">
        <div className="relative flex h-[27px] w-[131px] border-b border-[#525d67]">
          <select aria-label="选择" className="w-full appearance-none bg-transparent pl-1 outline-none">
            <option>无选择</option>
          </select>
          <Caret large className="absolute right-[3px] top-[11px]" />
        </div>
        {['pickAdd', 'select', 'quickSelect'].map((n) => (
          <ToolButton key={n} name={n} className="size-[21px] border border-[#525d67]" />
        ))}
      </div>
      <div className="mt-[22px] flex justify-between pl-2 pr-[9px]">
        <div className="flex w-[181px] flex-col gap-[25px]">
          {sections.map((s) => (
            <section key={s.title}>
              <div className="flex h-[25px] items-center justify-between border-b border-white pl-[5px] pr-[7px] pt-1">
                <h3 className="font-bold">{s.title}</h3>
                <Caret large className="mt-1" />
              </div>
              <table className="w-full table-fixed">
                <tbody>
                  {s.rows.map(([label, value, mark]) => (
                    <tr key={label} className="h-[25px] border-b border-[#525d67]">
                      <th className="w-[68px] overflow-hidden border-r border-[#525d67] pl-[5px] pt-[3px] text-left leading-5 font-normal whitespace-nowrap">
                        {label}
                      </th>
                      <td className={clsx('pl-0.5 leading-5', s.muted && 'text-[#9299a3]')}>
                        <span className="flex items-center gap-1">
                          {mark === 'swatch' && <span className="size-[10px] border border-black bg-white" />}
                          {mark && mark !== 'swatch' && <span className={clsx('h-px bg-white', mark)} />}
                          {value}
                        </span>
                      </td>
                    </tr>
                  ))}
                </tbody>
              </table>
            </section>
          ))}
        </div>
        <ScrollBar className="w-[15px]" thumb="h-[467px]" />
      </div>
    </aside>
  );
}

const numberKeys = [
  'C', '<--', 'sqrt', '/', '1/x',
  '7', '8', '9', '*', 'x^2',
  '4', '5', '6', '+', 'x^3',
  '1', '2', '3', '-', 'x^y',
  '0', '.', 'pi', '(', ')',
  '=', 'MS', 'M+', 'MR', 'MC',
];

const scienceKeys = [
  'sin', 'cos', 'tan', 'log', '10^x',
  'asin', 'acos', 'atan', 'ln', 'e^x',
  'r2d', 'd2r', 'abs', 'rnd', 'trunc',
];

function KeyPad({ keys }: { keys: string[] }) {
  return (
    <div className="grid grid-cols-5 gap-x-[10px] gap-y-[7px] pl-[10px] pr-[11px]">
      {keys.map((k) => (
        <button key={k} type="button" className="h-5 border border-[#9a9c9e] text-center text-xs leading-[18px]">
          {k}
        </button>
      ))}
    </div>
  );
}

function CalcHeading({ children }: { children: ReactNode }) {
  return <h3 className="h-5 pl-[3px] text-[15px] leading-5 font-bold">{children}<span className="font-normal">&lt;&lt;</span></h3>;
}

function VarGlyph({ muted, small }: { muted?: boolean; small?: string }) {
  return (
    <span className={clsx("font-['Liberation_Serif',serif] text-lg leading-4 italic", muted ? 'text-[#8d949e]' : 'text-[#4fa9f5]')}>
      x{small && <sup className={clsx('-ml-px text-[11px] not-italic', muted ? 'top-0 text-[#b4b9c0]' : 'text-[#f5b53f]')}>{small}</sup>}
    </span>
  );
}

function CalculatorPanel() {
  return (
    <aside className="mr-0.5 flex w-[280px] shrink-0 flex-col border-2 border-[#2b2e33] bg-[#434c58] text-xs text-white">
      <PanelHeader title="计算器" inset="pl-[18px]" />
      <div className="flex gap-1.5 pl-[15px] pt-[10px]">
        {['eraseGold', 'history', 'pasteCmd', 'getCoords', 'distance', 'angle', 'intersect', 'help'].map((n) => (
          <ToolButton key={n} name={n} className="size-5 border border-[#9a9c9e]" />
        ))}
      </div>
      <div className="flex min-h-0 flex-1">
        <div className="flex min-w-0 flex-1 flex-col overflow-hidden pl-[10px] pr-[5px] pt-[15px]">
          <textarea aria-label="历史记录" readOnly className="block h-20 shrink-0 resize-none border border-[#64686b] bg-transparent" />
          <input aria-label="输入" type="text" className="mt-[5px] h-5 shrink-0 border border-[#64686b] bg-transparent px-1" />
          <div className="mt-[10px]">
            <CalcHeading>数字键区</CalcHeading>
            <KeyPad keys={numberKeys} />
          </div>
          <div className="mt-[17px]">
            <CalcHeading>科学</CalcHeading>
            <KeyPad keys={scienceKeys} />
          </div>
          <div className="mt-[17px]">
            <CalcHeading>变量</CalcHeading>
            <div className="flex gap-[5px] pl-[10px]">
              <button type="button" aria-label="新建变量" className="flex size-5 items-center justify-center border border-[#9a9c9e]"><VarGlyph small="+" /></button>
              <button type="button" aria-label="编辑变量" className="flex size-5 items-center justify-center"><VarGlyph small="+" /></button>
              <button type="button" aria-label="删除变量" className="flex size-5 items-center justify-center"><VarGlyph muted small="×" /></button>
              <ToolButton name="calculator" className="size-5" />
            </div>
          </div>
          <div className="flex h-[139px] shrink-0 justify-between border border-[#6b6a68]">
            <ul className="pl-[7px] leading-5">
              <li className="flex h-5 items-center">
                <button type="button" aria-label="折叠" className="flex size-[9px] items-center justify-center bg-[#eef1f4]">
                  <span className="h-px w-[5px] bg-[#2b4fa0]" />
                </button>
                <span className="ml-1.5 mr-1 flex items-center">
                  <Icon name="folderVar" />
                  <span className="-ml-2"><VarGlyph /></span>
                </span>
                变量样例
              </li>
              <li>
                <ul className="ml-[23px] border-l border-dotted border-[#6b7480]">
                  {['Phi', 'dee', 'ille', 'mee', 'nee', 'rad'].map((v) => (
                    <li key={v} className="flex h-5 items-center">
                      <span className="w-3 border-t border-dotted border-[#6b7480]" />
                      <span className="w-[19px] pl-0.5">
                        {v === 'Phi' ? (
                          <span className="font-['Liberation_Serif',serif] text-base leading-4 font-bold text-[#5cb8ff]">k</span>
                        ) : (
                          <VarGlyph />
                        )}
                      </span>
                      {v}
                    </li>
                  ))}
                </ul>
              </li>
            </ul>
            <ScrollBar className="w-[17px]" thumb="h-[68px]" />
          </div>
          <h3 className="h-[21px] shrink-0 pl-0.5 leading-5">详细信息</h3>
          <div className="mx-0.5 min-h-0 flex-1 border border-b-0 border-[#6b6a68]" />
        </div>
        <ScrollBar className="mr-[5px] w-[15px]" thumb="h-[75px]" />
      </div>
    </aside>
  );
}

const modes: [string, boolean][] = [
  ['snap', false], ['grid', false], ['ortho', false], ['polar', true], ['osnap', true], ['otrack', true],
  ['ducs', true], ['dynInput', true], ['lineWeight', false], ['transparency', true], ['cycle', false], ['annoMon', true],
];

function StatusBar() {
  return (
    <footer className="flex h-[25px] shrink-0 items-center bg-[#31373f]">
      <div className={clsx('ml-[10px] h-[22px] w-[249px] border-b border-[#505763] text-[10px] leading-6 text-white', MONO)}>
        577.8243, 256.8363, 0.0000
      </div>
      <div className="ml-1 flex gap-1">
        {modes.map(([n, on]) => (
          <ToolButton key={n} name={n} className={clsx('size-5', on && 'border border-[#5cb3ff] bg-[#52677f]')} />
        ))}
      </div>
      <div className={clsx('ml-auto flex items-center pr-[3px] text-[#8f96a1]', MONO)}>
        <ToolButton name="units" className="size-[22px]" />
        <span className="text-xs">毫米</span>
        <Caret large className="ml-1 text-white" />
        <ToolButton name="annoScale" className="ml-1.5 size-[22px]" />
        <span className="text-[10px]">1:1</span>
        <Caret large className="mx-[5px] text-white" />
        {['annoVisible', 'annoAuto', 'isolate', 'gear', 'fullScreen', 'menu'].map((n) => (
          <ToolButton key={n} name={n} className="size-[22px]" />
        ))}
      </div>
    </footer>
  );
}

export default function App() {
  return (
    <div className={clsx('flex h-screen flex-col overflow-hidden bg-[#313741]', SANS)}>
      <TitleBar />
      <nav className="flex h-5 shrink-0 items-center gap-[15px] border-b border-white bg-[#2f3740] pl-[7px] text-xs text-white">
        {menus.map((m) => (
          <a key={m} href="#menu" className="leading-4 whitespace-nowrap">{m}</a>
        ))}
      </nav>
      <div className="shrink-0 text-white">
        <StandardToolbar />
        <LayerToolbar />
      </div>
      <div className="mt-0.5 flex min-h-0 flex-1 gap-1">
        <div className="flex min-w-0 flex-1 flex-col">
          <div className="flex min-h-0 flex-1 items-start gap-0.5">
            <SideTools tools={drawTools} />
            <div className="flex min-w-0 flex-1 flex-col self-stretch">
              <DocumentTabs />
              <Canvas />
              <LayoutTabs />
            </div>
            <div>
              <SideTools tools={modifyTools} />
              <SideTools tools={orderTools} />
            </div>
          </div>
          <CommandLine />
        </div>
        <div className="flex gap-0.5">
          <PropertiesPanel />
          <CalculatorPanel />
        </div>
      </div>
      <StatusBar />
    </div>
  );
}
